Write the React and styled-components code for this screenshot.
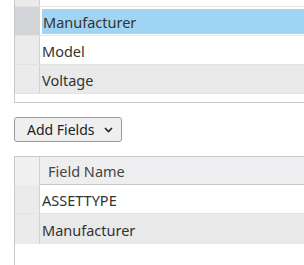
import React from 'react';
import styled, { createGlobalStyle } from 'styled-components';

const Global = createGlobalStyle`
  html, body { margin: 0; padding: 0; background: #fff; overflow: hidden; }
  body { font-family: 'Noto Sans', 'Open Sans', sans-serif; color: #333; }
`;

const Page = styled.div`
  padding-left: 14px;
  width: 290px;
`;

const Grid = styled.div`
  border-left: 1px solid #c9c9c9;
  border-bottom: ${p => (p.$closed ? '1px solid #c9c9c9' : 'none')};
  border-top: ${p => (p.$top ? '1px solid #c9c9c9' : 'none')};
  padding-bottom: ${p => p.$pad || 0}px;
  height: ${p => (p.$height ? p.$height + 'px' : 'auto')};
  box-sizing: border-box;
`;

const Row = styled.div`
  display: flex;
  height: ${p => p.$h || 29}px;
  box-sizing: border-box;
  border-bottom: ${p => (p.$noLine ? 'none' : '1px solid #e3e3e3')};
`;

const RowHead = styled.div`
  width: 25px;
  flex: none;
  background: ${p => (p.$active ? '#d3d4d8' : p.$light ? '#f0f0f0' : '#ebebeb')};
  border-right: 1px solid #d2d2d2;
  box-sizing: border-box;
`;

const Cell = styled.div`
  flex: 1;
  display: flex;
  align-items: stretch;
  padding: ${p => (p.$selected ? '2px 0 1px 2px' : '0')};
  background: ${p => (p.$shade ? '#e9e9e9' : '#fff')};
`;

const CellText = styled.div`
  flex: 1;
  display: flex;
  align-items: center;
  padding-left: ${p => p.$indent || 2}px;
  padding-top: 1px;
  font-size: 14.5px;
  color: #333;
  background: ${p => (p.$selected ? '#a0d4f3' : 'transparent')};
  white-space: nowrap;
`;

const HeaderCell = styled.div`
  flex: 1;
  display: flex;
  align-items: center;
  padding-left: 8px;
  font-size: 14.5px;
  color: #444;
  background: #eeeef0;
  border-bottom: 1px solid #c8c8c8;
`;

const Toolbar = styled.div`
  padding: 14px 0 14px 0;
`;

const SelectButton = styled.div`
  width: 108px;
  height: 25px;
  box-sizing: border-box;
  border: 1px solid #9a9a9a;
  border-radius: 3px;
  background: #efefef;
  display: flex;
  align-items: center;
  justify-content: space-between;
  padding: 0 8px 0 12px;
  font-size: 14px;
  color: #222;
`;

const Chevron = () => (
  <svg width="9" height="6" viewBox="0 0 9 6">
    <polyline points="1,1 4.5,4.5 8,1" fill="none" stroke="#222" strokeWidth="1.6" />
  </svg>
);

export default function App() {
  return (
    <Page>
      <Global />
      <Grid $closed $pad={8}>
        <Row $h={7}>
          <RowHead />
          <Cell />
        </Row>
        <Row>
          <RowHead $active />
          <Cell $selected>
            <CellText $selected $indent={1}>Manufacturer</CellText>
          </Cell>
        </Row>
        <Row>
          <RowHead />
          <Cell>
            <CellText>Model</CellText>
          </Cell>
        </Row>
        <Row>
          <RowHead />
          <Cell $shade>
            <CellText>Voltage</CellText>
          </Cell>
        </Row>
      </Grid>
      <Toolbar>
        <SelectButton>
          <span>Add Fields</span>
          <Chevron />
        </SelectButton>
      </Toolbar>
      <Grid $top $height={120}>
        <Row $h={28} $noLine>
          <RowHead $light />
          <HeaderCell>Field Name</HeaderCell>
        </Row>
        <Row>
          <RowHead />
          <Cell>
            <CellText>ASSETTYPE</CellText>
          </Cell>
        </Row>
        <Row $h={30} $noLine>
          <RowHead />
          <Cell $shade>
            <CellText>Manufacturer</CellText>
          </Cell>
        </Row>
      </Grid>
    </Page>
  );
}
